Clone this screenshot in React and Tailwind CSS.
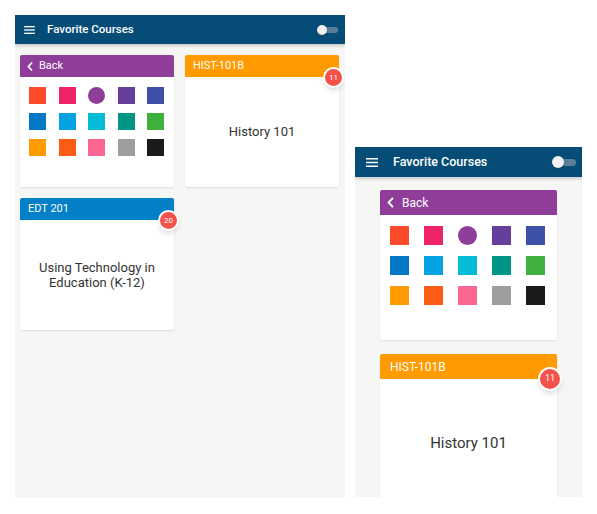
const swatches = [
  { c: "bg-[#fd4a2b]" },
  { c: "bg-[#ee2466]" },
  { c: "bg-[#8e3d98]", round: true },
  { c: "bg-[#663f9d]" },
  { c: "bg-[#3f51a7]" },
  { c: "bg-[#0278c6]" },
  { c: "bg-[#04a2e2]" },
  { c: "bg-[#02bbd6]" },
  { c: "bg-[#009585]" },
  { c: "bg-[#3fb03c]" },
  { c: "bg-[#ff9a00]" },
  { c: "bg-[#fb5b15]" },
  { c: "bg-[#fb6791]" },
  { c: "bg-[#9e9e9e]" },
  { c: "bg-[#1b1b1b]" },
];

function Hamburger({ className }) {
  return (
    <svg viewBox="0 0 12 9" className={className} fill="#fff">
      <rect x="0" y="0" width="12" height="1.5" />
      <rect x="0" y="3.75" width="12" height="1.5" />
      <rect x="0" y="7.5" width="12" height="1.5" />
    </svg>
  );
}

function Chevron({ className }) {
  return (
    <svg viewBox="0 0 8 12" className={className} fill="none" stroke="#fff" strokeWidth="2.2" strokeLinecap="square">
      <path d="M6 1.5 L1.8 6 L6 10.5" />
    </svg>
  );
}

function Toggle({ small }) {
  return small ? (
    <div className="relative h-[10px] w-[21px]">
      <div className="absolute left-[5px] top-[2px] h-[6px] w-[16px] rounded-full bg-[#5b7f99]" />
      <div className="absolute left-0 top-0 h-[10px] w-[10px] rounded-full bg-[#f2f2f2] shadow" />
    </div>
  ) : (
    <div className="relative h-[12px] w-[24px]">
      <div className="absolute left-[6px] top-[2.5px] h-[7px] w-[18px] rounded-full bg-[#5b7f99]" />
      <div className="absolute left-0 top-0 h-[12px] w-[12px] rounded-full bg-[#f2f2f2] shadow" />
    </div>
  );
}

function Badge({ n, small }) {
  return (
    <div
      className={
        small
          ? "absolute -right-[5px] top-[12px] flex h-[21px] w-[21px] items-center justify-center rounded-full border-2 border-white bg-[#f4514a] text-[8px] text-white shadow-md"
          : "absolute -right-[5px] top-[13px] flex h-[24px] w-[24px] items-center justify-center rounded-full border-2 border-white bg-[#f4514a] text-[9px] text-white shadow-md"
      }
    >
      {n}
    </div>
  );
}

export default function App() {
  return (
    <div className="flex h-[514px] w-[597px] items-start bg-white font-['Roboto',sans-serif]">
      {/* narrow-landscape view */}
      <div className="ml-[15px] mt-[15px] h-[483px] w-[330px] overflow-hidden bg-[#f6f6f4]">
        <div className="relative z-10 flex h-[29px] items-center bg-[#054c76] pl-[9px] pr-[7px] shadow-[0_2px_3px_rgba(0,0,0,0.18)]">
          <Hamburger className="h-[8px] w-[11px]" />
          <span className="ml-[12px] text-[11.5px] font-medium text-white">Favorite Courses</span>
          <div className="ml-auto">
            <Toggle small />
          </div>
        </div>
        <div className="grid grid-cols-[154px_154px] gap-[11px] pl-[5px] pt-[11px]">
          <div className="h-[132px] rounded-[2px] bg-white shadow-[0_1px_2px_rgba(0,0,0,0.1)]">
            <div className="flex h-[22px] items-center rounded-t-[2px] bg-[#8e3d98] pl-[7px] text-[11px] text-white">
              <Chevron className="h-[9px] w-[6px]" />
              <span className="ml-[6px]">Back</span>
            </div>
            <div className="grid grid-cols-[repeat(5,17px)] gap-x-[12.5px] gap-y-[9px] pl-[9px] pt-[10px]">
              {swatches.map((s, i) => (
                <div key={i} className={`h-[17px] w-[17px] ${s.c} ${s.round ? "rounded-full" : ""}`} />
              ))}
            </div>
          </div>
          <div className="relative h-[132px] rounded-[2px] bg-white shadow-[0_1px_2px_rgba(0,0,0,0.1)]">
            <div className="flex h-[22px] items-center rounded-t-[2px] bg-[#ff9a00] pl-[8px] text-[11px] text-white">HIST-101B</div>
            <Badge n="11" small />
            <div className="flex h-[110px] items-center justify-center text-[13px] text-[#333]">History 101</div>
          </div>
          <div className="relative h-[132px] rounded-[2px] bg-white shadow-[0_1px_2px_rgba(0,0,0,0.1)]">
            <div className="flex h-[22px] items-center rounded-t-[2px] bg-[#0380c8] pl-[8px] text-[11px] text-white">EDT 201</div>
            <Badge n="20" small />
            <div className="flex h-[110px] items-center justify-center px-[6px] text-center text-[13px] leading-[15px] text-[#333]">
              Using Technology in
              <br />
              Education (K-12)
            </div>
          </div>
        </div>
      </div>

      {/* portrait view */}
      <div className="ml-[10px] mt-[147px] h-[350px] w-[227px] overflow-hidden bg-[#f6f6f4]">
        <div className="relative z-10 flex h-[30px] items-center bg-[#054c76] pl-[11px] pr-[6px] shadow-[0_2px_3px_rgba(0,0,0,0.18)]">
          <Hamburger className="h-[9px] w-[12px]" />
          <span className="ml-[15px] text-[12.5px] font-medium text-white">Favorite Courses</span>
          <div className="ml-auto">
            <Toggle />
          </div>
        </div>
        <div className="flex flex-col gap-[14px] px-[25px] pt-[13px]">
          <div className="h-[150px] rounded-[2px] bg-white shadow-[0_1px_2px_rgba(0,0,0,0.1)]">
            <div className="flex h-[25px] items-center rounded-t-[2px] bg-[#8e3d98] pl-[7px] text-[12px] text-white">
              <Chevron className="h-[11px] w-[7px]" />
              <span className="ml-[8px]">Back</span>
            </div>
            <div className="grid grid-cols-[repeat(5,19px)] gap-x-[15px] gap-y-[11px] pl-[10px] pt-[11px]">
              {swatches.map((s, i) => (
                <div key={i} className={`h-[19px] w-[19px] ${s.c} ${s.round ? "rounded-full" : ""}`} />
              ))}
            </div>
          </div>
          <div className="relative h-[160px] rounded-[2px] bg-white shadow-[0_1px_2px_rgba(0,0,0,0.1)]">
            <div className="flex h-[25px] items-center rounded-t-[2px] bg-[#ff9a00] pl-[10px] text-[12px] text-white">HIST-101B</div>
            <Badge n="11" />
            <div className="flex h-[128px] items-center justify-center text-[15px] text-[#333]">History 101</div>
          </div>
        </div>
      </div>
    </div>
  );
}
